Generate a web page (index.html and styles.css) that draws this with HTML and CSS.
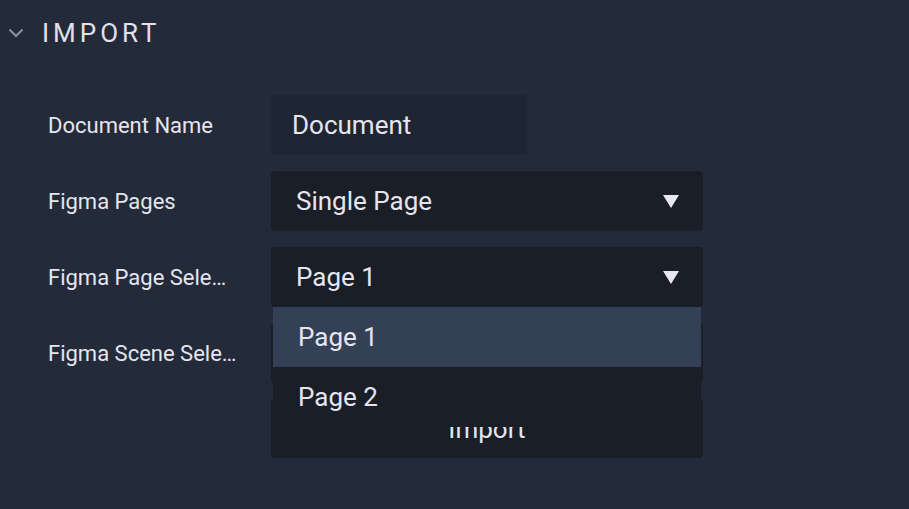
FILE: index.html
```html
<!DOCTYPE html>
<html>
<head>
<meta charset="utf-8">
<link rel="stylesheet" href="styles.css">
</head>
<body>
<div class="panel">
  <div class="section-head">
    <svg class="chevron" width="16" height="10" viewBox="0 0 16 10"><path d="M1.5 1.5 L8 8 L14.5 1.5" fill="none" stroke="#8b909b" stroke-width="2"/></svg>
    <span class="section-title">IMPORT</span>
  </div>
  <div class="form">
    <div class="row">
      <div class="label">Document Name</div>
      <div class="text-input">Document</div>
    </div>
    <div class="row">
      <div class="label">Figma Pages</div>
      <div class="select">
        <span class="select-value">Single Page</span>
        <svg class="caret" width="16" height="13" viewBox="0 0 16 13"><path d="M0 0 H16 L8 13 Z" fill="#e8e6ef"/></svg>
      </div>
    </div>
    <div class="row">
      <div class="label">Figma Page Selection</div>
      <div class="select-wrap">
        <div class="select">
          <span class="select-value">Page 1</span>
          <svg class="caret" width="16" height="13" viewBox="0 0 16 13"><path d="M0 0 H16 L8 13 Z" fill="#e8e6ef"/></svg>
        </div>
        <ul class="menu">
          <li class="menu-item active">Page 1</li>
          <li class="menu-item">Page 2</li>
        </ul>
      </div>
    </div>
    <div class="row">
      <div class="label">Figma Scene Selection</div>
      <div class="select">
        <span class="select-value">Scene 1</span>
        <svg class="caret" width="16" height="13" viewBox="0 0 16 13"><path d="M0 0 H16 L8 13 Z" fill="#e8e6ef"/></svg>
      </div>
    </div>
    <div class="row button-row">
      <div class="label"></div>
      <div class="button">Import</div>
    </div>
  </div>
</div>
</body>
</html>
```

FILE: styles.css
```css
html, body {
  margin: 0;
  padding: 0;
  background: #232b3b;
}
body {
  width: 909px;
  height: 509px;
  overflow: hidden;
  font-family: Roboto, "Liberation Sans", sans-serif;
  color: #e6e5ee;
}
.section-head {
  display: flex;
  align-items: center;
  height: 66px;
  padding-left: 8px;
  gap: 18px;
}
.chevron {
  display: block;
}
.section-title {
  font-size: 26px;
  letter-spacing: 4px;
  color: #e2e1ea;
  line-height: 1;
}
.form {
  display: flex;
  flex-direction: column;
  gap: 16px;
  padding-top: 29px;
  padding-left: 48px;
}
.row {
  display: flex;
  align-items: center;
  height: 60px;
}
.label {
  flex: 0 0 189px;
  margin-right: 34px;
  font-size: 22px;
  white-space: nowrap;
  overflow: hidden;
  text-overflow: ellipsis;
  color: #e6e5ee;
}
.text-input {
  width: 256px;
  height: 60px;
  box-sizing: border-box;
  background: #1e2533;
  font-size: 26px;
  line-height: 60px;
  padding-left: 21px;
}
.select-wrap {
  position: relative;
}
.select {
  width: 432px;
  height: 60px;
  box-sizing: border-box;
  background: #1a1e27;
  border-radius: 4px;
  display: flex;
  align-items: center;
  justify-content: space-between;
  padding: 0 24px 0 25px;
  font-size: 26px;
}
.caret {
  display: block;
}
.menu {
  position: absolute;
  left: 2px;
  top: 60px;
  width: 428px;
  margin: 0;
  padding: 0;
  list-style: none;
  background: #1a1e27;
  z-index: 2;
}
.menu-item {
  height: 60px;
  line-height: 60px;
  padding-left: 25px;
  font-size: 26px;
}
.menu-item.active {
  background: #344056;
}
.button-row {
  height: 59px;
}
.button {
  width: 432px;
  height: 59px;
  box-sizing: border-box;
  background: #1a1e27;
  border-radius: 4px;
  display: flex;
  align-items: center;
  justify-content: center;
  font-size: 26px;
}
```
